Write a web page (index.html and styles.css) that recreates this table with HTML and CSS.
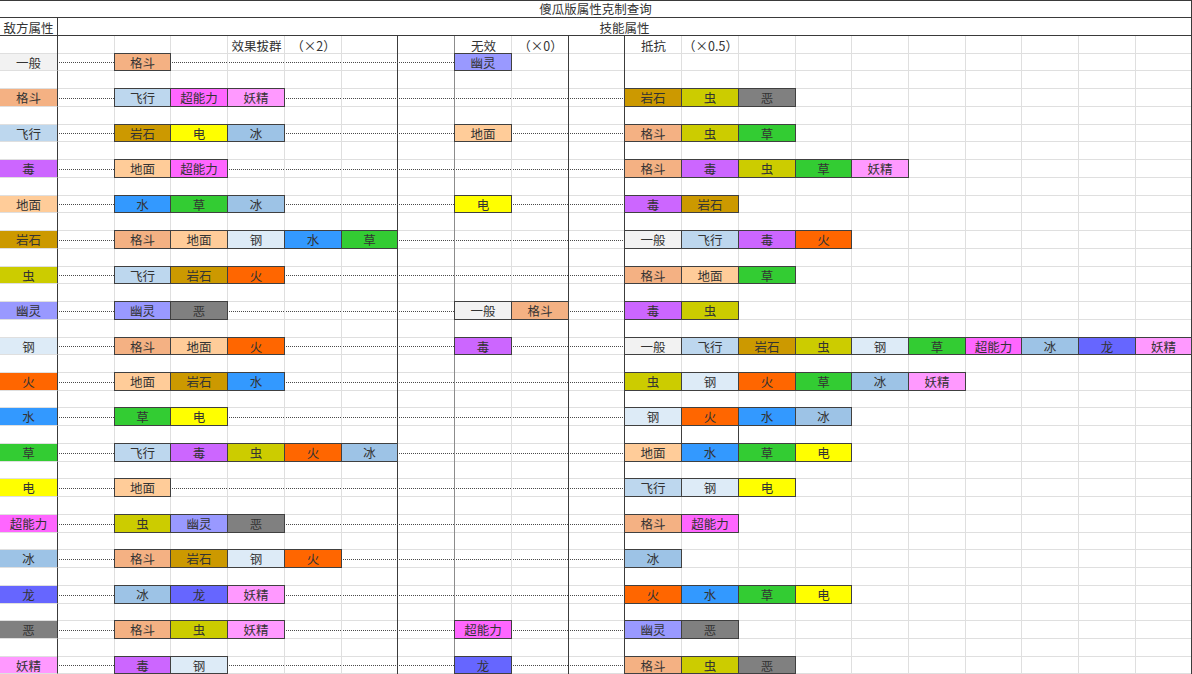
FILE: index.html
```html
<!DOCTYPE html>
<html lang="zh-CN">
<head>
<meta charset="utf-8">
<title>傻瓜版属性克制查询</title>
<link rel="stylesheet" href="styles.css">
</head>
<body>
<div class="sheet">
  <div class="title">傻瓜版属性克制查询</div>
  <div class="head"><div class="hk">敌方属性</div><div class="hs">技能属性</div></div>
  <div class="r"><span></span><span></span><span></span><span></span><span class="cap">效果拔群</span><span class="cap">（×2）</span><span></span><span></span><span class="cap">无效</span><span class="cap">（×0）</span><span></span><span class="cap">抵抗</span><span class="cap">（×0.5）</span></div>

  <div class="r"><b class="nor">一般</b><i></i><b class="fig">格斗</b><i></i><i></i><i></i><i></i><i></i><b class="gho">幽灵</b></div>
  <div class="r"></div>
  <div class="r"><b class="fig">格斗</b><i></i><b class="fly">飞行</b><b class="psy">超能力</b><b class="fai">妖精</b><i></i><i></i><i></i><i></i><i></i><i></i><b class="roc">岩石</b><b class="bug">虫</b><b class="dar">恶</b></div>
  <div class="r"></div>
  <div class="r"><b class="fly">飞行</b><i></i><b class="roc">岩石</b><b class="ele">电</b><b class="ice">冰</b><i></i><i></i><i></i><b class="gro">地面</b><i></i><i></i><b class="fig">格斗</b><b class="bug">虫</b><b class="gra">草</b></div>
  <div class="r"></div>
  <div class="r"><b class="poi">毒</b><i></i><b class="gro">地面</b><b class="psy">超能力</b><i></i><i></i><i></i><i></i><i></i><i></i><i></i><b class="fig">格斗</b><b class="poi">毒</b><b class="bug">虫</b><b class="gra">草</b><b class="fai">妖精</b></div>
  <div class="r"></div>
  <div class="r"><b class="gro">地面</b><i></i><b class="wat">水</b><b class="gra">草</b><b class="ice">冰</b><i></i><i></i><i></i><b class="ele">电</b><i></i><i></i><b class="poi">毒</b><b class="roc">岩石</b></div>
  <div class="r"></div>
  <div class="r"><b class="roc">岩石</b><i></i><b class="fig">格斗</b><b class="gro">地面</b><b class="ste">钢</b><b class="wat">水</b><b class="gra">草</b><i></i><i></i><i></i><i></i><b class="nor">一般</b><b class="fly">飞行</b><b class="poi">毒</b><b class="fir">火</b></div>
  <div class="r"></div>
  <div class="r"><b class="bug">虫</b><i></i><b class="fly">飞行</b><b class="roc">岩石</b><b class="fir">火</b><i></i><i></i><i></i><i></i><i></i><i></i><b class="fig">格斗</b><b class="gro">地面</b><b class="gra">草</b></div>
  <div class="r"></div>
  <div class="r"><b class="gho">幽灵</b><i></i><b class="gho">幽灵</b><b class="dar">恶</b><i></i><i></i><i></i><i></i><b class="nor">一般</b><b class="fig">格斗</b><i></i><b class="poi">毒</b><b class="bug">虫</b></div>
  <div class="r"></div>
  <div class="r"><b class="ste">钢</b><i></i><b class="fig">格斗</b><b class="gro">地面</b><b class="fir">火</b><i></i><i></i><i></i><b class="poi">毒</b><i></i><i></i><b class="nor">一般</b><b class="fly">飞行</b><b class="roc">岩石</b><b class="bug">虫</b><b class="ste">钢</b><b class="gra">草</b><b class="psy">超能力</b><b class="ice">冰</b><b class="dra">龙</b><b class="fai">妖精</b></div>
  <div class="r"></div>
  <div class="r"><b class="fir">火</b><i></i><b class="gro">地面</b><b class="roc">岩石</b><b class="wat">水</b><i></i><i></i><i></i><i></i><i></i><i></i><b class="bug">虫</b><b class="ste">钢</b><b class="fir">火</b><b class="gra">草</b><b class="ice">冰</b><b class="fai">妖精</b></div>
  <div class="r"></div>
  <div class="r"><b class="wat">水</b><i></i><b class="gra">草</b><b class="ele">电</b><i></i><i></i><i></i><i></i><i></i><i></i><i></i><b class="ste">钢</b><b class="fir">火</b><b class="wat">水</b><b class="ice">冰</b></div>
  <div class="r"><span></span><span></span><span></span><span></span><span></span><span></span><span></span><span></span><span></span><span></span><span></span><span></span><b class="emp"></b></div>
  <div class="r"><b class="gra">草</b><i></i><b class="fly">飞行</b><b class="poi">毒</b><b class="bug">虫</b><b class="fir">火</b><b class="ice">冰</b><i></i><i></i><i></i><i></i><b class="gro">地面</b><b class="wat">水</b><b class="gra">草</b><b class="ele">电</b></div>
  <div class="r"></div>
  <div class="r"><b class="ele">电</b><i></i><b class="gro">地面</b><i></i><i></i><i></i><i></i><i></i><i></i><i></i><i></i><b class="fly">飞行</b><b class="ste">钢</b><b class="ele">电</b></div>
  <div class="r"></div>
  <div class="r"><b class="psy">超能力</b><i></i><b class="bug">虫</b><b class="gho">幽灵</b><b class="dar">恶</b><i></i><i></i><i></i><i></i><i></i><i></i><b class="fig">格斗</b><b class="psy">超能力</b></div>
  <div class="r"></div>
  <div class="r"><b class="ice">冰</b><i></i><b class="fig">格斗</b><b class="roc">岩石</b><b class="ste">钢</b><b class="fir">火</b><i></i><i></i><i></i><i></i><i></i><b class="ice">冰</b></div>
  <div class="r"></div>
  <div class="r"><b class="dra">龙</b><i></i><b class="ice">冰</b><b class="dra">龙</b><b class="fai">妖精</b><i></i><i></i><i></i><i></i><i></i><i></i><b class="fir">火</b><b class="wat">水</b><b class="gra">草</b><b class="ele">电</b></div>
  <div class="r"></div>
  <div class="r"><b class="dar">恶</b><i></i><b class="fig">格斗</b><b class="bug">虫</b><b class="fai">妖精</b><i></i><i></i><i></i><b class="psy">超能力</b><i></i><i></i><b class="gho">幽灵</b><b class="dar">恶</b></div>
  <div class="r"></div>
  <div class="r"><b class="fai">妖精</b><i></i><b class="poi">毒</b><b class="ste">钢</b><i></i><i></i><i></i><i></i><b class="dra">龙</b><i></i><i></i><b class="fig">格斗</b><b class="bug">虫</b><b class="dar">恶</b></div>
</div>
</body>
</html>
```

FILE: styles.css
```css
html, body {
  margin: 0;
  padding: 0;
  background: #ffffff;
}

body {
  font-family: "Noto Sans CJK SC", "Noto Sans CJK JP", "Noto Sans", sans-serif;
  font-size: 12.5px;
  color: #333333;
}

.sheet {
  width: 1192px;
  height: 674px;
  overflow: hidden;
  display: grid;
  grid-template-columns: 1192px;
  grid-template-rows:
    18px 18px 18px
    17px 18px 18px 18px 17px 18px 18px 18px 17px 18px 18px 18px 17px 18px 18px 18px
    17px 18px 18px 17px 18px 18px 18px 17px 18px 18px 18px 17px 18px 18px 18px 17px
    18px 18px 17px;
}

.title {
  box-sizing: border-box;
  border-top: 1px solid #3a3a3a;
  border-bottom: 1px solid #3a3a3a;
  border-right: 1px solid #3a3a3a;
  display: flex;
  align-items: center;
  justify-content: center;
  line-height: 16px;
}

.head {
  box-sizing: border-box;
  display: grid;
  grid-template-columns: 58px 1fr;
  border-bottom: 1px solid #3a3a3a;
  border-right: 1px solid #3a3a3a;
}

.hk {
  border-right: 1px solid #3a3a3a;
  display: flex;
  align-items: center;
  justify-content: center;
}

.hs {
  display: flex;
  align-items: center;
  justify-content: center;
}

.r {
  --lt: linear-gradient(#dfdfdf, #dfdfdf);
  --dk: linear-gradient(#3c3c3c, #3c3c3c);
  display: grid;
  grid-template-columns: 58px 57px 56px 57px 57px 57px 56px 57px 57px 57px 56px 57px 57px 57px 56px 57px 57px 56px 57px 57px 56px;
  grid-template-rows: 100%;
  background-image:
    var(--dk), var(--dk), var(--dk), var(--dk), var(--dk),
    linear-gradient(#8c8c8c, #8c8c8c),
    var(--lt),
    var(--lt), var(--lt), var(--lt), var(--lt), var(--lt),
    var(--lt), var(--lt), var(--lt), var(--lt), var(--lt),
    var(--lt), var(--lt), var(--lt), var(--lt), var(--lt);
  background-position:
    57px 0, 397px 0, 568px 0, 624px 0, 1191px 0,
    454px 0,
    0 100%,
    114px 0, 170px 0, 227px 0, 284px 0, 341px 0,
    511px 0, 681px 0, 738px 0, 795px 0, 851px 0,
    908px 0, 965px 0, 1021px 0, 1078px 0, 1135px 0;
  background-size:
    1px 100%, 1px 100%, 1px 100%, 1px 100%, 1px 100%,
    1px 100%,
    100% 1px,
    1px 100%, 1px 100%, 1px 100%, 1px 100%, 1px 100%,
    1px 100%, 1px 100%, 1px 100%, 1px 100%, 1px 100%,
    1px 100%, 1px 100%, 1px 100%, 1px 100%, 1px 100%;
  background-repeat: no-repeat;
}

.cap {
  display: flex;
  align-items: center;
  justify-content: center;
  white-space: nowrap;
}

.r > i {
  background-image: linear-gradient(90deg, #4a4a4a 1px, transparent 1px);
  background-size: 2px 1px;
  background-position: 1px 50%;
  background-repeat: repeat-x;
}

.r > b {
  box-sizing: border-box;
  font-weight: normal;
  display: flex;
  align-items: center;
  justify-content: center;
  white-space: nowrap;
  border-right: 1px solid #404040;
  border-bottom: 1px solid #404040;
  box-shadow: -1px 0 0 #404040, 0 -1px 0 #404040, -1px -1px 0 #404040;
}

.r > b:first-child {
  border-right: 1px solid #3c3c3c;
  border-bottom: 1px solid #dfdfdf;
  box-shadow: none;
}

.emp { background: #ffffff; }
.nor { background: #f2f2f2; }
.fig { background: #f4b183; }
.fly { background: #bdd7ee; }
.poi { background: #cc66ff; }
.gro { background: #ffcc99; }
.roc { background: #cc9900; }
.bug { background: #cccc00; }
.gho { background: #9999ff; }
.ste { background: #ddebf7; }
.fir { background: #ff6600; }
.wat { background: #3399ff; }
.gra { background: #33cc33; }
.ele { background: #ffff00; }
.psy { background: #ff66ff; }
.ice { background: #9dc3e6; }
.dra { background: #6666ff; }
.dar { background: #808080; }
.fai { background: #ff99ff; }
```
